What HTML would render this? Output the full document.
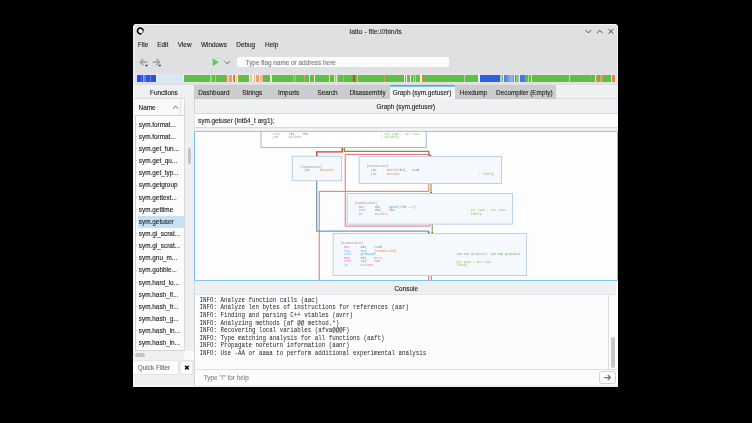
<!DOCTYPE html>
<html><head><meta charset="utf-8">
<style>
*{margin:0;padding:0;box-sizing:border-box}
html,body{width:752px;height:423px;background:#000;overflow:hidden;font-family:"Liberation Sans",sans-serif;position:relative}
.a{position:absolute}
.t{position:absolute;white-space:nowrap;line-height:1;-webkit-text-stroke:0.12px currentColor}
.m{position:absolute;white-space:nowrap;line-height:1;font-family:"Liberation Mono",monospace}
svg{position:absolute;left:0;top:0}
</style></head><body><div id="root" style="position:absolute;left:0;top:0;width:752px;height:423px;will-change:transform">
<div class="a" style="left:133.00px;top:24.00px;width:485.00px;height:363.00px;background:#dfe0e1;border-radius:3px 3px 0 0"></div>
<div class="a" style="left:135.00px;top:24.00px;width:481.00px;height:1.00px;background:#f2f2f3;"></div>
<div class="a" style="left:617.00px;top:26.00px;width:1.00px;height:58.00px;background:#eeeff0;"></div>
<svg width="752" height="423" style="z-index:5">
<circle cx="140.35" cy="31.0" r="4.3" fill="#f4f4f4" opacity="0.7"/>
<circle cx="140.35" cy="31.0" r="2.2" fill="#ffffff"/>
<path d="M143.16,30.51 A2.85,2.85 0 1 0 141.32,33.68" fill="none" stroke="#0a0a0a" stroke-width="1.75"/>
<path d="M141.32,33.68 A2.85,2.85 0 0 0 143.16,30.51" fill="none" stroke="#1a1a1a" stroke-width="0.9"/>
</svg>
<div class="t" style="left:349.60px;top:28.00px;font-size:7px;color:#2a2c2d;">iaito - file:///bin/ls</div>
<svg width="752" height="423" style="z-index:5">
<polyline points="585.7,30.2 588.4,32.9 591.1,30.2" fill="none" stroke="#43464a" stroke-width="1.0"/>
<polyline points="597.1,32.9 599.7,30.2 602.3,32.9" fill="none" stroke="#43464a" stroke-width="1.0"/>
<path d="M608.5,29.3 L613.3,33.6 M613.3,29.3 L608.5,33.6" fill="none" stroke="#43464a" stroke-width="1.0"/>
</svg>
<div class="t" style="left:138.00px;top:42.00px;font-size:6.4px;color:#232627;">File</div>
<div class="t" style="left:157.20px;top:42.00px;font-size:6.4px;color:#232627;">Edit</div>
<div class="t" style="left:177.80px;top:42.00px;font-size:6.4px;color:#232627;">View</div>
<div class="t" style="left:201.00px;top:42.00px;font-size:6.4px;color:#232627;">Windows</div>
<div class="t" style="left:236.30px;top:42.00px;font-size:6.4px;color:#232627;">Debug</div>
<div class="t" style="left:265.10px;top:42.00px;font-size:6.4px;color:#232627;">Help</div>
<svg width="752" height="423" style="z-index:5">
<path d="M147.2,62.2 H140.6 M143.3,59.2 L140.3,62.2 L143.3,65.2" fill="none" stroke="#a4a6a8" stroke-width="1.7" stroke-linejoin="round"/>
<path d="M145.4,65.0 L147.6,65.0 L146.5,66.6 Z" fill="#3a3c3e" stroke="#3a3c3e" stroke-width="0.4"/>
<path d="M152.6,62.2 H159.4 M156.5,59.2 L159.5,62.2 L156.5,65.2" fill="none" stroke="#a4a6a8" stroke-width="1.7" stroke-linejoin="round"/>
<path d="M158.7,65.0 L160.9,65.0 L159.8,66.6 Z" fill="#3a3c3e" stroke="#3a3c3e" stroke-width="0.4"/>
<path d="M212.7,58.2 L218.7,62.2 L212.7,66.2 Z" fill="#58cd5e"/>
<path d="M224.7,61.2 L227.3,63.7 L229.9,61.2" fill="none" stroke="#5d6062" stroke-width="0.9"/>
<path d="M218.2,57.6 v1.4" stroke="#b0b0b0" stroke-width="0.6"/>
</svg>
<div class="a" style="left:236.60px;top:57.00px;width:212.40px;height:10.00px;background:#fcfcfc;border-radius:2px"></div>
<div class="t" style="left:245.60px;top:60.00px;font-size:6.4px;color:#7c7e80;">Type flag name or address here</div>
<div class="a" style="left:135.50px;top:73.90px;width:480.00px;height:9.40px;background:#e9e2ee;"></div>
<div class="a" style="left:136.50px;top:75.00px;width:478.40px;height:7.00px;background:#5cc13f;"></div>
<div class="a" style="left:136.60px;top:75.00px;width:4.40px;height:7.00px;background:#2250e6;"></div>
<div class="a" style="left:141.00px;top:75.00px;width:0.80px;height:7.00px;background:#4a74ea;"></div>
<div class="a" style="left:141.80px;top:75.00px;width:1.20px;height:7.00px;background:#1e4ce4;"></div>
<div class="a" style="left:143.00px;top:75.00px;width:1.20px;height:7.00px;background:#92aaf0;"></div>
<div class="a" style="left:144.20px;top:75.00px;width:1.80px;height:7.00px;background:#5a7ef0;"></div>
<div class="a" style="left:146.00px;top:75.00px;width:3.60px;height:7.00px;background:#2a56e8;"></div>
<div class="a" style="left:149.60px;top:75.00px;width:1.20px;height:7.00px;background:#6282f0;"></div>
<div class="a" style="left:150.80px;top:75.00px;width:4.90px;height:7.00px;background:#2450e6;"></div>
<div class="a" style="left:155.70px;top:75.00px;width:1.20px;height:7.00px;background:#eef4f6;"></div>
<div class="a" style="left:156.90px;top:75.00px;width:25.90px;height:7.00px;background:#d7e9f4;"></div>
<div class="a" style="left:182.80px;top:75.00px;width:1.20px;height:7.00px;background:#eef4f2;"></div>
<div class="a" style="left:210.00px;top:75.00px;width:1.60px;height:7.00px;background:#9ad882;"></div>
<div class="a" style="left:214.80px;top:75.00px;width:1.60px;height:7.00px;background:#9ad882;"></div>
<div class="a" style="left:226.00px;top:75.00px;width:1.10px;height:7.00px;background:#e88a3c;"></div>
<div class="a" style="left:227.10px;top:75.00px;width:2.10px;height:7.00px;background:#c8e0b0;"></div>
<div class="a" style="left:229.20px;top:75.00px;width:2.70px;height:7.00px;background:#eda062;"></div>
<div class="a" style="left:231.90px;top:75.00px;width:1.00px;height:7.00px;background:#f0f2ec;"></div>
<div class="a" style="left:234.00px;top:75.00px;width:1.00px;height:7.00px;background:#e0702a;"></div>
<div class="a" style="left:235.00px;top:75.00px;width:1.10px;height:7.00px;background:#f0f2ec;"></div>
<div class="a" style="left:236.10px;top:75.00px;width:1.10px;height:7.00px;background:#f0c090;"></div>
<div class="a" style="left:237.20px;top:75.00px;width:1.00px;height:7.00px;background:#f0f2ec;"></div>
<div class="a" style="left:248.80px;top:75.00px;width:1.10px;height:7.00px;background:#f4f4f4;"></div>
<div class="a" style="left:249.90px;top:75.00px;width:2.10px;height:7.00px;background:#f0c29c;"></div>
<div class="a" style="left:252.00px;top:75.00px;width:2.10px;height:7.00px;background:#e6f2f6;"></div>
<div class="a" style="left:254.10px;top:75.00px;width:0.80px;height:7.00px;background:#eeb68a;"></div>
<div class="a" style="left:254.90px;top:75.00px;width:1.10px;height:7.00px;background:#f4f4f4;"></div>
<div class="a" style="left:256.00px;top:75.00px;width:2.90px;height:7.00px;background:#eba262;"></div>
<div class="a" style="left:258.90px;top:75.00px;width:1.10px;height:7.00px;background:#f4f4f4;"></div>
<div class="a" style="left:260.00px;top:75.00px;width:2.60px;height:7.00px;background:#f0b88e;"></div>
<div class="a" style="left:270.00px;top:75.00px;width:1.70px;height:7.00px;background:#e2f0e0;"></div>
<div class="a" style="left:293.00px;top:75.00px;width:1.00px;height:7.00px;background:#8fd478;"></div>
<div class="a" style="left:295.30px;top:75.00px;width:1.00px;height:7.00px;background:#8fd478;"></div>
<div class="a" style="left:304.00px;top:75.00px;width:1.10px;height:7.00px;background:#c9a860;"></div>
<div class="a" style="left:308.90px;top:75.00px;width:1.10px;height:7.00px;background:#f4f4f4;"></div>
<div class="a" style="left:313.70px;top:75.00px;width:1.00px;height:7.00px;background:#f4f4f4;"></div>
<div class="a" style="left:329.00px;top:75.00px;width:1.10px;height:7.00px;background:#d8eed0;"></div>
<div class="a" style="left:333.90px;top:75.00px;width:4.20px;height:7.00px;background:#dfe6cc;"></div>
<div class="a" style="left:334.80px;top:75.00px;width:0.60px;height:7.00px;background:#d2b070;"></div>
<div class="a" style="left:336.80px;top:75.00px;width:0.60px;height:7.00px;background:#d2b070;"></div>
<div class="a" style="left:342.90px;top:75.00px;width:1.10px;height:7.00px;background:#c9a860;"></div>
<div class="a" style="left:353.00px;top:75.00px;width:2.10px;height:7.00px;background:#e03a22;"></div>
<div class="a" style="left:356.60px;top:75.00px;width:1.60px;height:7.00px;background:#a8d890;"></div>
<div class="a" style="left:384.10px;top:75.00px;width:1.00px;height:7.00px;background:#d0a050;"></div>
<div class="a" style="left:403.80px;top:75.00px;width:1.00px;height:7.00px;background:#eef4ee;"></div>
<div class="a" style="left:404.80px;top:75.00px;width:1.10px;height:7.00px;background:#ec7c34;"></div>
<div class="a" style="left:405.90px;top:75.00px;width:1.60px;height:7.00px;background:#f4f4f4;"></div>
<div class="a" style="left:408.60px;top:75.00px;width:1.00px;height:7.00px;background:#e8883c;"></div>
<div class="a" style="left:409.60px;top:75.00px;width:1.60px;height:7.00px;background:#f2f4f2;"></div>
<div class="a" style="left:412.50px;top:75.00px;width:0.80px;height:7.00px;background:#a8dc92;"></div>
<div class="a" style="left:415.00px;top:75.00px;width:0.80px;height:7.00px;background:#a8dc92;"></div>
<div class="a" style="left:419.20px;top:75.00px;width:1.10px;height:7.00px;background:#d8904a;"></div>
<div class="a" style="left:420.30px;top:75.00px;width:1.60px;height:7.00px;background:#eef4ee;"></div>
<div class="a" style="left:421.90px;top:75.00px;width:1.10px;height:7.00px;background:#ec7c34;"></div>
<div class="a" style="left:464.00px;top:75.00px;width:0.60px;height:7.00px;background:#a8dc92;"></div>
<div class="a" style="left:478.00px;top:75.00px;width:1.50px;height:7.00px;background:#f4f4f4;"></div>
<div class="a" style="left:479.50px;top:75.00px;width:20.50px;height:7.00px;background:#2d5fe2;"></div>
<div class="a" style="left:500.00px;top:75.00px;width:1.90px;height:7.00px;background:#a6cbd8;"></div>
<div class="a" style="left:501.90px;top:75.00px;width:1.30px;height:7.00px;background:#62c842;"></div>
<div class="a" style="left:503.20px;top:75.00px;width:1.00px;height:7.00px;background:#eef4f0;"></div>
<div class="a" style="left:504.20px;top:75.00px;width:3.00px;height:7.00px;background:#5a80e8;"></div>
<div class="a" style="left:507.20px;top:75.00px;width:1.00px;height:7.00px;background:#80a0c4;"></div>
<div class="a" style="left:508.20px;top:75.00px;width:1.10px;height:7.00px;background:#6a8ae8;"></div>
<div class="a" style="left:509.30px;top:75.00px;width:2.70px;height:7.00px;background:#94b4bc;"></div>
<div class="a" style="left:512.00px;top:75.00px;width:1.00px;height:7.00px;background:#8aa8e8;"></div>
<div class="a" style="left:513.00px;top:75.00px;width:1.10px;height:7.00px;background:#5cc43c;"></div>
<div class="a" style="left:514.10px;top:75.00px;width:0.80px;height:7.00px;background:#e8f0ec;"></div>
<div class="a" style="left:514.90px;top:75.00px;width:1.30px;height:7.00px;background:#5282c2;"></div>
<div class="a" style="left:516.20px;top:75.00px;width:3.20px;height:7.00px;background:#88c888;"></div>
<div class="a" style="left:519.40px;top:75.00px;width:0.80px;height:7.00px;background:#dde8f0;"></div>
<div class="a" style="left:520.20px;top:75.00px;width:4.80px;height:7.00px;background:#4e72e8;"></div>
<div class="a" style="left:527.90px;top:75.00px;width:1.60px;height:7.00px;background:#a8d898;"></div>
<div class="a" style="left:531.10px;top:75.00px;width:1.10px;height:7.00px;background:#d8ecd0;"></div>
<div class="a" style="left:569.40px;top:75.00px;width:0.60px;height:7.00px;background:#b4e0a2;"></div>
<div class="a" style="left:590.50px;top:75.00px;width:1.60px;height:7.00px;background:#e8883a;"></div>
<div class="a" style="left:595.30px;top:75.00px;width:1.10px;height:7.00px;background:#e4f0dc;"></div>
<div class="a" style="left:596.40px;top:75.00px;width:1.00px;height:7.00px;background:#e89050;"></div>
<div class="a" style="left:600.10px;top:75.00px;width:1.60px;height:7.00px;background:#c8b070;"></div>
<div class="a" style="left:601.70px;top:75.00px;width:1.60px;height:7.00px;background:#e88a3c;"></div>
<div class="a" style="left:611.30px;top:75.00px;width:1.00px;height:7.00px;background:#d8e8c8;"></div>
<div class="a" style="left:612.30px;top:75.00px;width:2.60px;height:7.00px;background:#e8883a;"></div>
<div class="a" style="left:133.00px;top:83.30px;width:485.00px;height:1.70px;background:#dfe0e1;"></div>
<div class="a" style="left:133.00px;top:85.00px;width:61.20px;height:13.30px;background:#eeeff0;"></div>
<div class="t" style="left:150.00px;top:90.00px;font-size:6.4px;color:#232627;">Functions</div>
<div class="a" style="left:133.00px;top:98.30px;width:61.20px;height:288.70px;background:#eeeff0;"></div>
<div class="a" style="left:133.00px;top:97.90px;width:61.20px;height:0.70px;background:#dcddde;"></div>
<div class="a" style="left:135.30px;top:98.60px;width:49.10px;height:16.60px;background:#f9f9fa;"></div>
<div class="a" style="left:135.00px;top:115.00px;width:49.00px;height:1.00px;background:#d2d4d5;"></div>
<div class="a" style="left:180.00px;top:99.00px;width:1.00px;height:16.00px;background:#e2e3e4;"></div>
<div class="a" style="left:133.00px;top:26.00px;width:2.00px;height:59.00px;background:#ebeced;"></div>
<div class="a" style="left:133.00px;top:85.00px;width:2.00px;height:302.00px;background:#f4f5f5;"></div>
<div class="a" style="left:133.00px;top:385.00px;width:485.00px;height:2.00px;background:#f6f6f7;"></div>
<div class="t" style="left:138.60px;top:105.00px;font-size:6.4px;color:#232627;">Name</div>
<svg width="752" height="423" style="z-index:5">
<polyline points="173.2,108.8 175.6,106.0 178.0,108.8" fill="none" stroke="#44474a" stroke-width="0.8"/>
</svg>
<div class="a" style="left:135.00px;top:116.00px;width:49.00px;height:234.00px;background:#fcfcfc;"></div>
<div class="a" style="left:135.00px;top:116.00px;width:1.00px;height:234.00px;background:#d0d2d4;"></div>
<div class="a" style="left:184.00px;top:98.00px;width:1.00px;height:253.00px;background:#d9dbdc;"></div>
<div class="a" style="left:135.00px;top:350.00px;width:49.00px;height:1.00px;background:#d2d4d5;"></div>
<div class="a" style="left:135.90px;top:123.90px;width:1.50px;height:0.60px;background:#c6c8ca;"></div>
<div class="t" style="left:138.80px;top:122.00px;font-size:6.4px;color:#232627;">sym.format...</div>
<div class="a" style="left:135.90px;top:136.03px;width:1.50px;height:0.60px;background:#c6c8ca;"></div>
<div class="t" style="left:138.80px;top:134.00px;font-size:6.4px;color:#232627;">sym.format...</div>
<div class="a" style="left:135.90px;top:148.17px;width:1.50px;height:0.60px;background:#c6c8ca;"></div>
<div class="t" style="left:138.80px;top:146.00px;font-size:6.4px;color:#232627;">sym.get_fun...</div>
<div class="a" style="left:135.90px;top:160.30px;width:1.50px;height:0.60px;background:#c6c8ca;"></div>
<div class="t" style="left:138.80px;top:158.00px;font-size:6.4px;color:#232627;">sym.get_qu...</div>
<div class="a" style="left:135.90px;top:172.44px;width:1.50px;height:0.60px;background:#c6c8ca;"></div>
<div class="t" style="left:138.80px;top:170.00px;font-size:6.4px;color:#232627;">sym.get_typ...</div>
<div class="a" style="left:135.90px;top:184.57px;width:1.50px;height:0.60px;background:#c6c8ca;"></div>
<div class="t" style="left:138.80px;top:182.00px;font-size:6.4px;color:#232627;">sym.getgroup</div>
<div class="a" style="left:135.90px;top:196.71px;width:1.50px;height:0.60px;background:#c6c8ca;"></div>
<div class="t" style="left:138.80px;top:195.00px;font-size:6.4px;color:#232627;">sym.gettext...</div>
<div class="a" style="left:135.90px;top:208.84px;width:1.50px;height:0.60px;background:#c6c8ca;"></div>
<div class="t" style="left:138.80px;top:207.00px;font-size:6.4px;color:#232627;">sym.gettime</div>
<div class="a" style="left:137.60px;top:215.78px;width:46.50px;height:12.00px;background:#c4e1f5;"></div>
<div class="a" style="left:135.90px;top:220.98px;width:1.50px;height:0.60px;background:#c6c8ca;"></div>
<div class="t" style="left:138.80px;top:219.00px;font-size:6.4px;color:#232627;">sym.getuser</div>
<div class="a" style="left:135.90px;top:233.11px;width:1.50px;height:0.60px;background:#c6c8ca;"></div>
<div class="t" style="left:138.80px;top:231.00px;font-size:6.4px;color:#232627;">sym.gl_scrat...</div>
<div class="a" style="left:135.90px;top:245.25px;width:1.50px;height:0.60px;background:#c6c8ca;"></div>
<div class="t" style="left:138.80px;top:243.00px;font-size:6.4px;color:#232627;">sym.gl_scrat...</div>
<div class="a" style="left:135.90px;top:257.38px;width:1.50px;height:0.60px;background:#c6c8ca;"></div>
<div class="t" style="left:138.80px;top:255.00px;font-size:6.4px;color:#232627;">sym.gnu_m...</div>
<div class="a" style="left:135.90px;top:269.52px;width:1.50px;height:0.60px;background:#c6c8ca;"></div>
<div class="t" style="left:138.80px;top:267.00px;font-size:6.4px;color:#232627;">sym.gobble...</div>
<div class="a" style="left:135.90px;top:281.66px;width:1.50px;height:0.60px;background:#c6c8ca;"></div>
<div class="t" style="left:138.80px;top:280.00px;font-size:6.4px;color:#232627;">sym.hard_lo...</div>
<div class="a" style="left:135.90px;top:293.79px;width:1.50px;height:0.60px;background:#c6c8ca;"></div>
<div class="t" style="left:138.80px;top:292.00px;font-size:6.4px;color:#232627;">sym.hash_fi...</div>
<div class="a" style="left:135.90px;top:305.93px;width:1.50px;height:0.60px;background:#c6c8ca;"></div>
<div class="t" style="left:138.80px;top:304.00px;font-size:6.4px;color:#232627;">sym.hash_fr...</div>
<div class="a" style="left:135.90px;top:318.06px;width:1.50px;height:0.60px;background:#c6c8ca;"></div>
<div class="t" style="left:138.80px;top:316.00px;font-size:6.4px;color:#232627;">sym.hash_g...</div>
<div class="a" style="left:135.90px;top:330.19px;width:1.50px;height:0.60px;background:#c6c8ca;"></div>
<div class="t" style="left:138.80px;top:328.00px;font-size:6.4px;color:#232627;">sym.hash_in...</div>
<div class="a" style="left:135.90px;top:342.33px;width:1.50px;height:0.60px;background:#c6c8ca;"></div>
<div class="t" style="left:138.80px;top:340.00px;font-size:6.4px;color:#232627;">sym.hash_in...</div>
<div class="a" style="left:184.60px;top:98.30px;width:9.60px;height:252.00px;background:#eeeff0;"></div>
<div class="a" style="left:187.50px;top:147.80px;width:3.60px;height:15.80px;background:#c4c6c8;border-radius:2px"></div>
<div class="a" style="left:133.40px;top:350.60px;width:51.00px;height:9.40px;background:#eeeff0;"></div>
<div class="a" style="left:135.40px;top:353.40px;width:9.20px;height:3.50px;background:#c4c6c8;border-radius:2px"></div>
<div class="a" style="left:184.40px;top:350.60px;width:9.80px;height:9.40px;background:#fafafa;"></div>
<svg width="752" height="423">
<path d="M133,360.8 H176.7 A2,2 0 0 1 178.7,362.8 V372.4 A2,2 0 0 1 176.7,374.4 H133" fill="#fdfdfd" stroke="#dadcde" stroke-width="0.8"/>
</svg>
<div class="t" style="left:137.80px;top:365.00px;font-size:6.4px;color:#5f7086;">Quick Filter</div>
<svg width="752" height="423" style="z-index:5">
<rect x="180.0" y="360.8" width="12.9" height="13.6" rx="2.2" fill="#fdfdfd" stroke="#d3d5d7" stroke-width="0.8"/>
<path d="M185.0,365.7 L188.8,369.5 M188.8,365.7 L185.0,369.5" stroke="#111" stroke-width="1.3"/>
<path d="M186.1,366.8 L187.7,368.4 M187.7,366.8 L186.1,368.4" stroke="#000" stroke-width="1.6"/>
</svg>
<div class="a" style="left:194.20px;top:85.00px;width:423.80px;height:302.00px;background:#eff0f1;"></div>
<div class="a" style="left:194.00px;top:98.00px;width:1.00px;height:288.00px;background:#d5d7d8;"></div>
<div class="a" style="left:194.20px;top:85.10px;width:362.10px;height:13.40px;background:#cbcccd;border-radius:0 2px 0 0"></div>
<div class="a" style="left:194.20px;top:97.60px;width:362.10px;height:0.90px;background:#c3c4c5;"></div>
<div class="a" style="left:390.00px;top:85.00px;width:65.00px;height:14.00px;background:#f3f4f5;"></div>
<div class="a" style="left:390.00px;top:85.00px;width:65.00px;height:1.00px;background:#3daee9;"></div>
<div class="a" style="left:390.00px;top:86.00px;width:65.00px;height:1.00px;background:#7cc8ef;"></div>
<div class="t" style="left:198.20px;top:90.00px;font-size:6.4px;color:#232627;">Dashboard</div>
<div class="t" style="left:242.30px;top:90.00px;font-size:6.4px;color:#232627;">Strings</div>
<div class="t" style="left:278.00px;top:90.00px;font-size:6.4px;color:#232627;">Imports</div>
<div class="t" style="left:317.40px;top:90.00px;font-size:6.4px;color:#232627;">Search</div>
<div class="t" style="left:349.40px;top:90.00px;font-size:6.4px;color:#232627;">Disassembly</div>
<div class="t" style="left:392.70px;top:90.00px;font-size:6.4px;color:#232627;">Graph (sym.getuser)</div>
<div class="t" style="left:459.80px;top:90.00px;font-size:6.4px;color:#232627;">Hexdump</div>
<div class="t" style="left:496.10px;top:90.00px;font-size:6.4px;color:#232627;">Decompiler (Empty)</div>
<div class="t" style="left:376.60px;top:104.00px;font-size:6.4px;color:#232627;">Graph (sym.getuser)</div>
<div class="a" style="left:194.00px;top:113.00px;width:424.00px;height:15.00px;background:#fdfdfd;border:1px solid #d8dadb;border-right:none;border-left-color:#e4e5e6;border-radius:2px 0 0 2px"></div>
<div class="a" style="left:556.00px;top:98.00px;width:61.00px;height:1.00px;background:#d9dadb;"></div>
<div class="t" style="left:198.00px;top:118.00px;font-size:6.4px;color:#232627;">sym.getuser (int64_t arg1);</div>
<div class="a" style="left:194.00px;top:130.80px;width:424.00px;height:150.10px;background:#fdfdfd;border:1.15px solid #74c0ea;border-top-color:#8ccff2;border-bottom-color:#7ec6ee;border-radius:1.5px"></div>
<div class="a" style="left:195.15px;top:131.95px;width:421.7px;height:147.8px;overflow:hidden"><svg width="421.7" height="147.8" viewBox="195.15 131.95 421.7 147.8" style="position:absolute;left:0;top:0"><polyline points="342.4,147.3 342.4,151.9 317.0,151.9 317.0,156.2" fill="none" stroke="#e22c2c" stroke-width="1.3"/><polyline points="344.5,147.3 344.5,151.3 429.0,151.3 429.0,156.4" fill="none" stroke="#6e9e34" stroke-width="1.3"/><polyline points="430.2,224.0 430.2,226.0 345.4,226.0 345.4,154.4 430.6,154.4 430.6,156.4" fill="none" stroke="#ec5f5c" stroke-width="0.9"/><polyline points="429.0,183.4 429.0,191.3 319.4,191.3 319.4,282" fill="none" stroke="#ec5f5c" stroke-width="0.9"/><polyline points="431.2,183.4 431.2,193.4" fill="none" stroke="#6e9e34" stroke-width="1.0"/><polyline points="316.9,180.6 316.9,231.0 428.8,231.0 428.8,233.6" fill="none" stroke="#6b9cc0" stroke-width="1.3"/><polyline points="432.4,224.0 432.4,233.6" fill="none" stroke="#6e9e34" stroke-width="1.0"/><polyline points="428.6,275.2 428.6,282" fill="none" stroke="#ec5f5c" stroke-width="0.9"/><polyline points="431.4,275.2 431.4,282" fill="none" stroke="#6e9e34" stroke-width="1.0"/><path d="M315.9,155 L318.1,155 L317,157 Z" fill="#e22c2c"/><path d="M429.5,155.2 L431.7,155.2 L430.6,157 Z" fill="#e22c2c"/><path d="M427.7,232.2 L429.9,232.2 L428.8,234 Z" fill="#2f5f90"/><path d="M430.2,192.0 L432.2,192.0 L431.2,193.8 Z" fill="#4e7a22"/><path d="M431.4,232.2 L433.4,232.2 L432.4,234.0 Z" fill="#4e7a22"/><rect x="261.2" y="100" width="165.20" height="47.40" fill="#ffffff" stroke="#9fb8d2" stroke-width="1.0"/><rect x="292.4" y="156.2" width="49.20" height="24.50" fill="#f5f9fd" stroke="#abc6dd" stroke-width="0.8"/><rect x="359.3" y="156.3" width="142.20" height="27.20" fill="#f5f9fd" stroke="#abc6dd" stroke-width="0.8"/><rect x="347.3" y="193.4" width="165.30" height="30.70" fill="#f5f9fd" stroke="#abc6dd" stroke-width="0.8"/><rect x="333.3" y="233.6" width="193.20" height="41.70" fill="#f5f9fd" stroke="#abc6dd" stroke-width="0.8"/><g font-family="Liberation Mono" font-size="3.1" fill-opacity="0.85"><text x="273" y="134.65" fill="#e548c8">test</text><text x="289" y="134.65" fill="#3b6f96">rbx,</text><text x="302.8" y="134.65" fill="#3b6f96">rbx</text><text x="380.9" y="134.65" fill="#5aaf3a">; str.7a42 ; str.7a42</text><text x="273" y="138.35" fill="#6aa83c">jne</text><text x="289" y="138.35" fill="#ec7a3a">0x14507</text><text x="380.9" y="138.45" fill="#5aaf3a">; unlikely</text><text x="300.1" y="167.55" fill="#8d8f91">[0x00014048]</text><text x="304.1" y="171.05" fill="#6aa83c">jmp</text><text x="320.1" y="171.05" fill="#ec7a3a">0x14658</text><text x="366.7" y="167.25" fill="#8d8f91">[0x00014052]</text><text x="371" y="170.95" fill="#e548c8">cmp</text><text x="386.9" y="170.95" fill="#e548c8">dword</text><text x="396.5" y="170.95" fill="#5aaf3a">[</text><text x="398.4" y="170.95" fill="#3b6f96">rbx</text><text x="404" y="170.95" fill="#5aaf3a">],</text><text x="411.9" y="170.95" fill="#3b6f96">r14d</text><text x="371" y="174.95" fill="#6aa83c">jne</text><text x="386.9" y="174.95" fill="#ec7a3a">0x14068</text><text x="479" y="174.65" fill="#5aaf3a">; likely</text><text x="355.1" y="204.05" fill="#8d8f91">[0x00014040]</text><text x="358.8" y="207.95" fill="#e548c8">mov</text><text x="374.8" y="207.95" fill="#3b6f96">rbx,</text><text x="389.1" y="207.95" fill="#2f9ad6">qword</text><text x="399.4" y="207.95" fill="#5aaf3a">[</text><text x="401.3" y="207.95" fill="#3b6f96">rbx</text><text x="408.6" y="207.95" fill="#5aaf3a">+</text><text x="412.3" y="207.95" fill="#ec7a3a">8</text><text x="414.2" y="207.95" fill="#5aaf3a">]</text><text x="358.8" y="211.35" fill="#e548c8">test</text><text x="374.8" y="211.35" fill="#3b6f96">rbx,</text><text x="389.1" y="211.35" fill="#3b6f96">rbx</text><text x="466.9" y="210.95" fill="#5aaf3a">; str.7a42 ; str.7a42</text><text x="358.8" y="215.05" fill="#6aa83c">je</text><text x="374.8" y="215.05" fill="#ec7a3a">0x1457a</text><text x="466.9" y="214.75" fill="#5aaf3a">; likely</text><text x="340.9" y="244.35" fill="#8d8f91">[0x00014070]</text><text x="344.2" y="247.95" fill="#e548c8">mov</text><text x="360.6" y="247.95" fill="#3b6f96">edi,</text><text x="374.5" y="247.95" fill="#3b6f96">r13d</text><text x="344.2" y="251.55" fill="#e548c8">lea</text><text x="360.6" y="251.55" fill="#3b6f96">rsi,</text><text x="374.5" y="251.55" fill="#5aaf3a">[</text><text x="376.4" y="251.55" fill="#ec7a3a">0x00017ab0</text><text x="395" y="251.55" fill="#5aaf3a">]</text><text x="344.2" y="255.05" fill="#2f9ad6">call</text><text x="360.6" y="255.05" fill="#2f9ad6">getpwuid</text><text x="452.6" y="255.45" fill="#8d8f91">; sym.imp.getpwuid</text><text x="486.7" y="255.45" fill="#5aaf3a">; sym.imp.getpwuid</text><text x="344.2" y="258.65" fill="#e548c8">mov</text><text x="360.6" y="258.65" fill="#3b6f96">edi,</text><text x="374.5" y="258.65" fill="#ec7a3a">0x18</text><text x="344.2" y="262.25" fill="#e548c8">test</text><text x="360.6" y="262.25" fill="#3b6f96">rax,</text><text x="374.5" y="262.25" fill="#3b6f96">rax</text><text x="452.6" y="262.85" fill="#5aaf3a">; str.7a42 ; str.7a42</text><text x="344.2" y="265.85" fill="#6aa83c">je</text><text x="360.6" y="265.85" fill="#ec7a3a">0x1490c</text><text x="452.6" y="266.15" fill="#5aaf3a">; likely</text></g></svg></div>
<div class="a" style="left:194.70px;top:281.50px;width:421.50px;height:13.80px;background:#eeeff0;"></div>
<div class="a" style="left:616.20px;top:281.50px;width:1.80px;height:13.80px;background:#fafafa;"></div>
<div class="a" style="left:195.00px;top:294.00px;width:421.00px;height:1.00px;background:#e6e7e8;"></div>
<div class="t" style="left:394.50px;top:286.00px;font-size:6.4px;color:#232627;">Console</div>
<div class="a" style="left:194.70px;top:295.30px;width:423.30px;height:74.10px;background:#fcfcfc;"></div>
<div class="m" style="left:199.6px;top:296.90px;font-size:5.82px;color:#1c1e1f;transform:scaleY(1.16);transform-origin:0 0">INFO: Analyze function calls (aac)</div>
<div class="m" style="left:199.6px;top:304.44px;font-size:5.82px;color:#1c1e1f;transform:scaleY(1.16);transform-origin:0 0">INFO: Analyze len bytes of instructions for references (aar)</div>
<div class="m" style="left:199.6px;top:311.98px;font-size:5.82px;color:#1c1e1f;transform:scaleY(1.16);transform-origin:0 0">INFO: Finding and parsing C++ vtables (avrr)</div>
<div class="m" style="left:199.6px;top:319.52px;font-size:5.82px;color:#1c1e1f;transform:scaleY(1.16);transform-origin:0 0">INFO: Analyzing methods (af @@ method.*)</div>
<div class="m" style="left:199.6px;top:327.06px;font-size:5.82px;color:#1c1e1f;transform:scaleY(1.16);transform-origin:0 0">INFO: Recovering local variables (afva@@@F)</div>
<div class="m" style="left:199.6px;top:334.60px;font-size:5.82px;color:#1c1e1f;transform:scaleY(1.16);transform-origin:0 0">INFO: Type matching analysis for all functions (aaft)</div>
<div class="m" style="left:199.6px;top:342.14px;font-size:5.82px;color:#1c1e1f;transform:scaleY(1.16);transform-origin:0 0">INFO: Propagate noreturn information (aanr)</div>
<div class="m" style="left:199.6px;top:349.68px;font-size:5.82px;color:#1c1e1f;transform:scaleY(1.16);transform-origin:0 0">INFO: Use -AA or aaaa to perform additional experimental analysis</div>
<div class="a" style="left:608.30px;top:295.30px;width:0.60px;height:74.10px;background:#dadcdd;"></div>
<div class="a" style="left:611.00px;top:336.50px;width:4.10px;height:31.00px;background:#c4c6c8;border-radius:2px"></div>
<div class="a" style="left:194.70px;top:369.10px;width:423.30px;height:0.60px;background:#dadcdd;"></div>
<div class="a" style="left:195.00px;top:370.00px;width:423.00px;height:15.00px;background:#fcfcfc;"></div>
<div class="t" style="left:203.80px;top:375.00px;font-size:6.4px;color:#85878a;">Type &quot;/&quot; for help</div>
<div class="a" style="left:598.60px;top:370.70px;width:17.60px;height:13.70px;background:#fcfcfc;border:0.7px solid #d0d2d4;border-radius:2.5px"></div>
<svg width="752" height="423" style="z-index:5">
<path d="M604.2,377.6 H610.2 M607.8,375.0 L610.4,377.6 L607.8,380.2" fill="none" stroke="#6f7274" stroke-width="1.1"/>
</svg>
</div></body></html>
